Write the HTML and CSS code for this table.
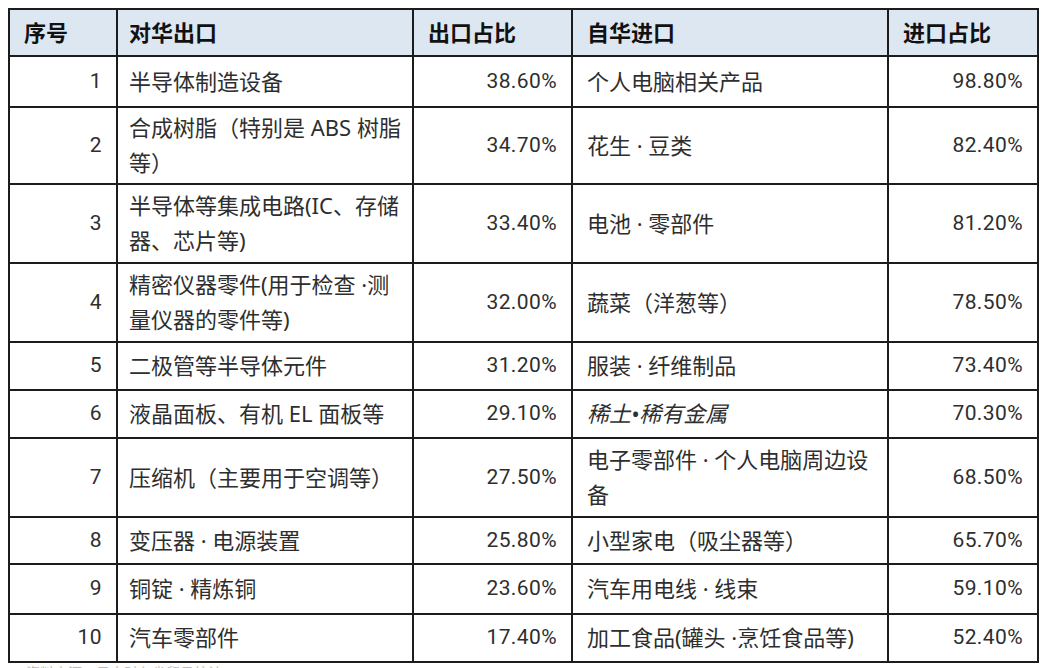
FILE: index.html
```html
<!DOCTYPE html>
<html lang="zh-CN">
<head>
<meta charset="utf-8">
<title>对华进出口占比</title>
<link rel="stylesheet" href="styles.css">
</head>
<body>
<table class="trade">
  <colgroup>
    <col class="c-no">
    <col class="c-exp">
    <col class="c-expr">
    <col class="c-imp">
    <col class="c-impr">
  </colgroup>
  <thead>
    <tr>
      <th>序号</th>
      <th class="item">对华出口</th>
      <th>出口占比</th>
      <th>自华进口</th>
      <th>进口占比</th>
    </tr>
  </thead>
  <tbody>
    <tr class="first"><td class="num">1</td><td class="item">半导体制造设备</td><td class="pct">38.60%</td><td>个人电脑相关产品</td><td class="pct">98.80%</td></tr>
    <tr class="tall compact"><td class="num">2</td><td class="item">合成树脂（特别是 ABS 树脂<br>等）</td><td class="pct">34.70%</td><td>花生 · 豆类</td><td class="pct">82.40%</td></tr>
    <tr class="tall"><td class="num">3</td><td class="item">半导体等集成电路(IC、存储<br>器、芯片等)</td><td class="pct">33.40%</td><td>电池 · 零部件</td><td class="pct">81.20%</td></tr>
    <tr class="tall"><td class="num">4</td><td class="item">精密仪器零件(用于检查 ·测<br>量仪器的零件等)</td><td class="pct">32.00%</td><td>蔬菜（洋葱等）</td><td class="pct">78.50%</td></tr>
    <tr><td class="num">5</td><td class="item">二极管等半导体元件</td><td class="pct">31.20%</td><td>服装 · 纤维制品</td><td class="pct">73.40%</td></tr>
    <tr><td class="num">6</td><td class="item">液晶面板、有机 EL 面板等</td><td class="pct">29.10%</td><td><em>稀土•稀有金属</em></td><td class="pct">70.30%</td></tr>
    <tr class="tall"><td class="num">7</td><td class="item">压缩机（主要用于空调等）</td><td class="pct">27.50%</td><td>电子零部件 · 个人电脑周边设<br>备</td><td class="pct">68.50%</td></tr>
    <tr class="short"><td class="num">8</td><td class="item">变压器 · 电源装置</td><td class="pct">25.80%</td><td>小型家电（吸尘器等）</td><td class="pct">65.70%</td></tr>
    <tr class="wide"><td class="num">9</td><td class="item">铜锭 · 精炼铜</td><td class="pct">23.60%</td><td>汽车用电线 · 线束</td><td class="pct">59.10%</td></tr>
    <tr><td class="num">10</td><td class="item">汽车零部件</td><td class="pct">17.40%</td><td>加工食品(罐头 ·烹饪食品等)</td><td class="pct">52.40%</td></tr>
  </tbody>
</table>
<p class="source">资料来源：日本财务省贸易统计</p>
</body>
</html>
```

FILE: styles.css
```css
html, body {
  margin: 0;
  padding: 0;
  background: #ffffff;
}

body {
  padding: 8px;
  font-family: "Noto Sans", "Noto Sans CJK SC", sans-serif;
  color: #2e2e2e;
}

.trade {
  border-collapse: collapse;
  table-layout: fixed;
  width: 1029px;
  font-size: 22px;
}

.c-no { width: 108px; }
.c-exp { width: 296px; }
.c-expr { width: 159px; }
.c-imp { width: 316px; }
.c-impr { width: 150px; }

.trade th,
.trade td {
  border: 2px solid #1c1c1c;
  padding: 3px 14px 4px 14px;
  line-height: 35px;
  vertical-align: middle;
  text-align: left;
  white-space: nowrap;
}

.trade th.item,
.trade td.item {
  padding-left: 11px;
}

.trade thead tr {
  height: 47px;
  background: #dde7f2;
}

.trade th {
  font-weight: 700;
  color: #111111;
}

.trade tbody tr {
  height: 48px;
}

.trade tbody tr.first {
  height: 51px;
}

.trade tbody tr.short {
  height: 47px;
}

.trade tbody tr.compact td {
  padding-top: 2px;
  padding-bottom: 3px;
}

.trade tbody tr.wide {
  height: 50px;
}

.trade td.num,
.trade td.pct {
  text-align: right;
  font-family: Roboto, "Noto Sans", sans-serif;
  font-size: 21px;
  letter-spacing: 0.4px;
}

.trade em {
  font-style: italic;
}

.source {
  margin: 2px 0 0 18px;
  font-size: 14px;
  line-height: 16px;
  color: #bbbbbb;
}
```
